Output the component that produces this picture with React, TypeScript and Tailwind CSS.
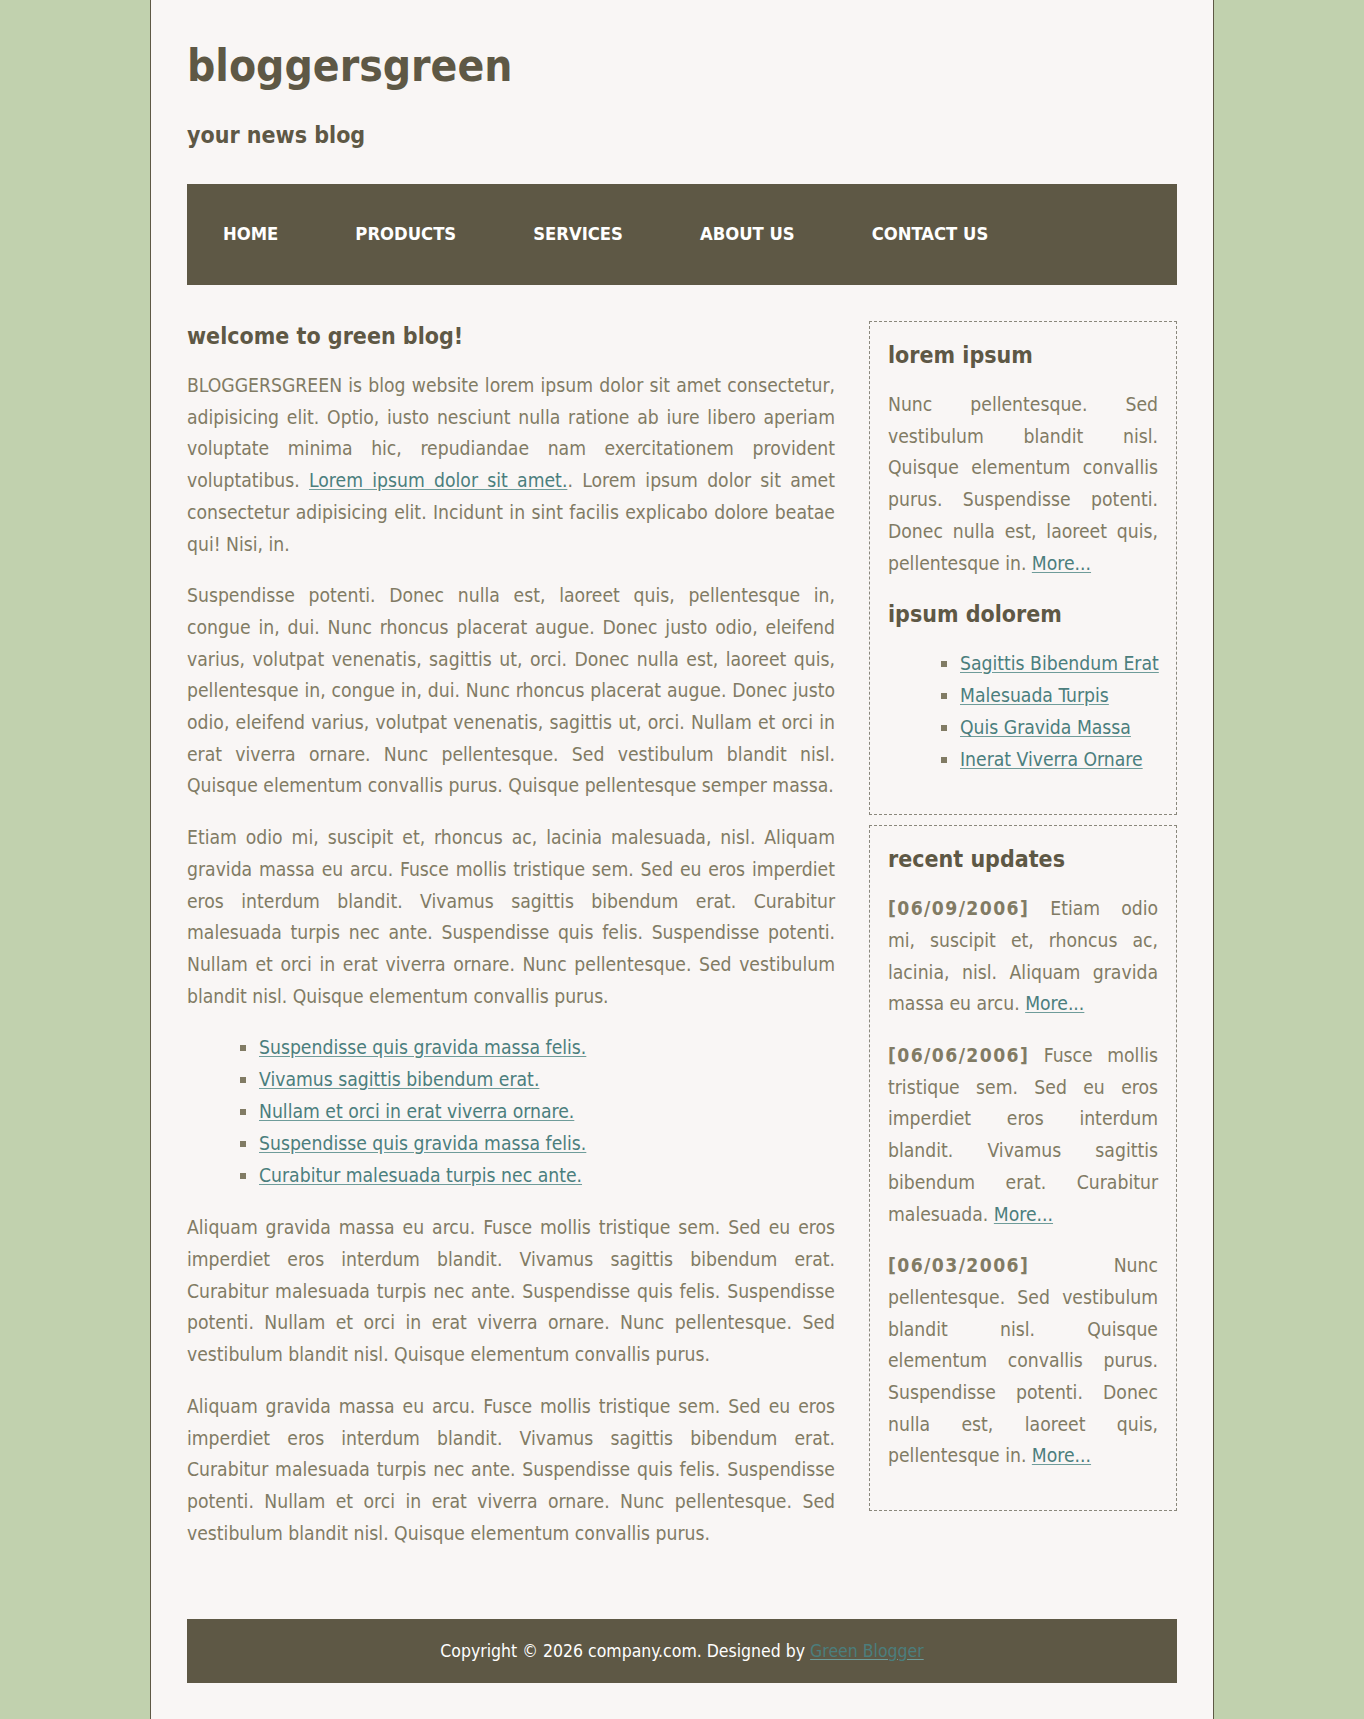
const NAV = ["HOME", "PRODUCTS", "SERVICES", "ABOUT US", "CONTACT US"];

const LIST = [
  "Suspendisse quis gravida massa felis.",
  "Vivamus sagittis bibendum erat.",
  "Nullam et orci in erat viverra ornare.",
  "Suspendisse quis gravida massa felis.",
  "Curabitur malesuada turpis nec ante.",
];

const SIDE_LINKS = ["Sagittis Bibendum Erat", "Malesuada Turpis", "Quis Gravida Massa", "Inerat Viverra Ornare"];

const UPDATES = [
  { date: "[06/09/2006]", text: "Etiam odio mi, suscipit et, rhoncus ac, lacinia, nisl. Aliquam gravida massa eu arcu." },
  { date: "[06/06/2006]", text: "Fusce mollis tristique sem. Sed eu eros imperdiet eros interdum blandit. Vivamus sagittis bibendum erat. Curabitur malesuada." },
  { date: "[06/03/2006]", text: "Nunc pellentesque. Sed vestibulum blandit nisl. Quisque elementum convallis purus. Suspendisse potenti. Donec nulla est, laoreet quis, pellentesque in." },
];

const ALIQUAM =
  "Aliquam gravida massa eu arcu. Fusce mollis tristique sem. Sed eu eros imperdiet eros interdum blandit. Vivamus sagittis bibendum erat. Curabitur malesuada turpis nec ante. Suspendisse quis felis. Suspendisse potenti. Nullam et orci in erat viverra ornare. Nunc pellentesque. Sed vestibulum blandit nisl. Quisque elementum convallis purus.";

function A({ children }: { children: React.ReactNode }) {
  return (
    <a href="#" className="text-[#4b7e7d] underline decoration-[#6f9c9a] underline-offset-2">
      {children}
    </a>
  );
}

function P({ children }: { children: React.ReactNode }) {
  return <p className="mb-5 text-justify leading-[31.7px]">{children}</p>;
}

function H({ children }: { children: React.ReactNode }) {
  return <h2 className="mb-[18px] text-[23px] font-bold leading-[31px] text-[#5e5845]">{children}</h2>;
}

export default function App() {
  return (
    <div className="min-h-screen bg-[#c1d1ae] font-['DejaVu_Sans_Condensed','DejaVu_Sans',sans-serif] text-[19.2px] text-[#817b64]">
      <div className="mx-auto w-[1064px] border-x border-[#5e5845] bg-[#f9f6f5] px-9 pt-9 pb-9">
        {/* header */}
        <h1 className="text-[44px] font-bold leading-[60px] text-[#5e5845]">bloggersgreen</h1>
        <p className="mt-[22px] text-[23px] font-bold leading-[34px] text-[#5e5845]">your news blog</p>

        <nav className="mt-[32px] flex h-[101px] items-center bg-[#5e5845] pl-9">
          <ul className="flex gap-[77px]">
            {NAV.map((n) => (
              <li key={n}>
                <a href="#" className="text-[18.3px] font-bold text-white">{n}</a>
              </li>
            ))}
          </ul>
        </nav>

        <div className="mt-9 flex items-start gap-[34px]">
          {/* main column */}
          <main className="w-[648px]">
            <H>welcome to green blog!</H>
            <P>
              BLOGGERSGREEN is blog website lorem ipsum dolor sit amet consectetur, adipisicing elit. Optio, iusto nesciunt
              nulla ratione ab iure libero aperiam voluptate minima hic, repudiandae nam exercitationem provident
              voluptatibus. <A>Lorem ipsum dolor sit amet.</A>. Lorem ipsum dolor sit amet consectetur adipisicing elit.
              Incidunt in sint facilis explicabo dolore beatae qui! Nisi, in.
            </P>
            <P>
              Suspendisse potenti. Donec nulla est, laoreet quis, pellentesque in, congue in, dui. Nunc rhoncus placerat
              augue. Donec justo odio, eleifend varius, volutpat venenatis, sagittis ut, orci. Donec nulla est, laoreet
              quis, pellentesque in, congue in, dui. Nunc rhoncus placerat augue. Donec justo odio, eleifend varius,
              volutpat venenatis, sagittis ut, orci. Nullam et orci in erat viverra ornare. Nunc pellentesque. Sed
              vestibulum blandit nisl. Quisque elementum convallis purus. Quisque pellentesque semper massa.
            </P>
            <P>
              Etiam odio mi, suscipit et, rhoncus ac, lacinia malesuada, nisl. Aliquam gravida massa eu arcu. Fusce mollis
              tristique sem. Sed eu eros imperdiet eros interdum blandit. Vivamus sagittis bibendum erat. Curabitur
              malesuada turpis nec ante. Suspendisse quis felis. Suspendisse potenti. Nullam et orci in erat viverra ornare.
              Nunc pellentesque. Sed vestibulum blandit nisl. Quisque elementum convallis purus.
            </P>
            <ul className="mb-5 ml-8 list-[square] pl-10 leading-8 marker:text-[#817b64]">
              {LIST.map((l, i) => (
                <li key={i}>
                  <A>{l}</A>
                </li>
              ))}
            </ul>
            <P>{ALIQUAM}</P>
            <P>{ALIQUAM}</P>
          </main>

          {/* sidebar */}
          <aside className="flex w-[308px] flex-col gap-[10px]">
            <div className="border border-dashed border-[#8a877c] p-[18px] pb-0">
              <H>lorem ipsum</H>
              <P>
                Nunc pellentesque. Sed vestibulum blandit nisl. Quisque elementum convallis purus. Suspendisse potenti.
                Donec nulla est, laoreet quis, pellentesque in. <A>More...</A>
              </P>
              <H>ipsum dolorem</H>
              <ul className="mb-[38px] ml-8 list-[square] pl-10 leading-8 whitespace-nowrap marker:text-[#817b64]">
                {SIDE_LINKS.map((l) => (
                  <li key={l}>
                    <A>{l}</A>
                  </li>
                ))}
              </ul>
            </div>
            <div className="border border-dashed border-[#8a877c] p-[18px] pb-[18px]">
              <H>recent updates</H>
              {UPDATES.map((u) => (
                <P key={u.date}>
                  <b className="font-bold tracking-[1.4px]">{u.date}</b> {u.text} <A>More...</A>
                </P>
              ))}
            </div>
          </aside>
        </div>

        <footer className="mt-[50px] flex h-[64px] items-center justify-center bg-[#5e5845] text-[17.5px] text-white">
          <p>
            Copyright © 2026 company.com. Designed by <A>Green Blogger</A>
          </p>
        </footer>
      </div>
    </div>
  );
}
